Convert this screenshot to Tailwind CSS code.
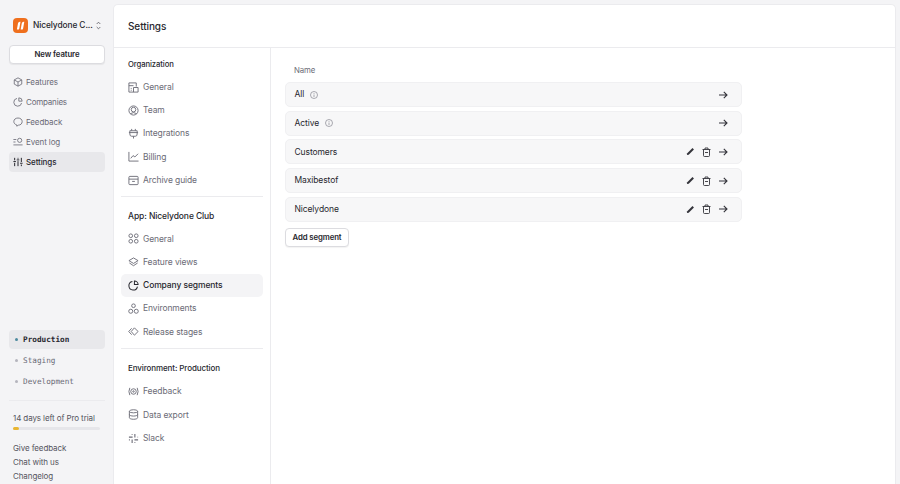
<!DOCTYPE html>
<html lang="en">
<head>
<meta charset="UTF-8">
<title>Settings</title>
<script src="https://cdn.jsdelivr.net/npm/@tailwindcss/browser@4"></script>
</head>
<body class="h-[484px] w-[900px] overflow-hidden bg-[#f4f4f6] font-['Inter',sans-serif] text-[8px] tracking-[-0.1px] text-[#6b6b76]">
<div class="flex h-full">
  <!-- sidebar -->
  <aside class="flex w-[113px] shrink-0 flex-col pl-[9px] pr-[8px]">
    <div class="mt-[17px] flex h-[17px] items-center pl-[4px]">
      <svg class="h-[15px] w-[15px] shrink-0" viewBox="0 0 15 15"><rect width="15" height="15" rx="4" fill="#ef6f1d"/><path d="M3.900 11.600 5 5.300Q5.300 3.800 6.800 3.800H7.500L6.300 10.400Q6.100 11.600 4.900 11.600ZM7.700 11.600 8.800 5.300Q9.100 3.800 10.600 3.800H11.300L10.100 10.400Q9.900 11.600 8.700 11.600Z" fill="#fff"/></svg>
      <span class="ml-[5px] w-[56px] whitespace-nowrap text-[8.400px] font-medium text-[#27272e]">Nicelydone C...</span>
      <svg class="ml-[7px] h-[9px] w-[5px] shrink-0" viewBox="0 0 5 9" fill="none" stroke="#55555e" stroke-width=".8"><path d="M.7 3 2.500 1.200 4.300 3M.7 6 2.500 7.800 4.300 6"/></svg>
    </div>
    <button class="mt-[11px] h-[19px] w-[96px] rounded-[4px] border border-[#dcdce0] bg-white text-[7.800px] font-semibold text-[#27272e] shadow-[0_1px_1px_rgba(0,0,0,.06)]">New feature</button>
    <nav class="mt-[8px] flex flex-col">
      <a class="flex h-[20px] items-center gap-[3px] pl-[4px]">
        <svg class="h-[10px] w-[10px] shrink-0" viewBox="0 0 12 12" fill="none" stroke="#6b6b76" stroke-width="1"><path d="M6 1 10.500 3.500V8.500L6 11 1.500 8.500V3.500ZM1.500 3.500 6 6 10.500 3.500M6 6V11"/></svg>
        <span>Features</span>
      </a>
      <a class="flex h-[20px] items-center gap-[3px] pl-[4px]">
        <svg class="h-[10px] w-[10px] shrink-0" viewBox="0 0 12 12" fill="none" stroke="#6b6b76" stroke-width="1"><path d="M4.800 1.700A4.700 4.700 0 1 0 10.300 7.200M7 1V5H11A4 4 0 0 0 7 1Z"/></svg>
        <span class="tracking-[-0.2px]">Companies</span>
      </a>
      <a class="flex h-[20px] items-center gap-[3px] pl-[4px]">
        <svg class="h-[10px] w-[10px] shrink-0" viewBox="0 0 12 12" fill="none" stroke="#6b6b76" stroke-width="1"><path d="M6 1.200C9 1.200 11 3 11 5.500S9 9.800 6.500 9.800L4.500 11V9.500C2.500 9 1 7.500 1 5.500 1 3 3 1.200 6 1.200Z"/></svg>
        <span>Feedback</span>
      </a>
      <a class="flex h-[20px] items-center gap-[3px] pl-[4px]">
        <svg class="h-[10px] w-[10px] shrink-0" viewBox="0 0 12 12" fill="none" stroke="#6b6b76" stroke-width="1"><path d="M.5 3H4M.5 6H3M.5 9.500H11.500"/><circle cx="8" cy="4" r="2.500"/></svg>
        <span>Event log</span>
      </a>
      <a class="flex h-[20px] items-center gap-[3px] rounded-[4px] bg-[#e8e8eb] pl-[4px] font-medium text-[#27272e]">
        <svg class="h-[10px] w-[10px] shrink-0" viewBox="0 0 12 12" fill="none" stroke="#27272e" stroke-width="1.200"><path d="M2 1V4M2 7V11M6 1V2M6 5V11M10 1V6M10 9V11M.5 5.500H3.500M4.500 3.500H7.500M8.500 7.500H11.500"/></svg>
        <span>Settings</span>
      </a>
    </nav>
    <div class="mt-auto flex flex-col">
      <div class="flex h-[19px] items-center gap-[5px] rounded-[4px] bg-[#e8e8eb] pl-[6px] font-['DejaVu_Sans_Mono',monospace] text-[7.700px] font-bold tracking-normal text-[#27272e]">
        <span class="h-[3px] w-[3px] rounded-full bg-[#4d8a9e]"></span>Production
      </div>
      <div class="mt-[2px] flex h-[19px] items-center gap-[5px] pl-[6px] font-['DejaVu_Sans_Mono',monospace] text-[7.700px] tracking-normal">
        <span class="h-[3px] w-[3px] rounded-full bg-[#b5b5bd]"></span>Staging
      </div>
      <div class="mt-[2px] flex h-[19px] items-center gap-[5px] pl-[6px] font-['DejaVu_Sans_Mono',monospace] text-[7.700px] tracking-normal">
        <span class="h-[3px] w-[3px] rounded-full bg-[#b5b5bd]"></span>Development
      </div>
      <div class="mt-[9px] border-t border-[#ebebee] pl-[4px] pt-[10px]">
        <p class="whitespace-nowrap leading-[14px] text-[#55555e]">14 days left of Pro trial</p>
        <div class="mt-[1.500px] h-[3px] w-[87px] rounded-full bg-[#e6e6ea]">
          <div class="h-[3px] rounded-full bg-[#e9b632]" style="width: 7%"></div>
        </div>
        <div class="mt-[12px] flex flex-col gap-[2px] pb-[2.500px] text-[#55555e]">
          <a class="leading-[12px]">Give feedback</a>
          <a class="leading-[12px]">Chat with us</a>
          <a class="leading-[12px]">Changelog</a>
        </div>
      </div>
    </div>
  </aside>

  <!-- main panel -->
  <main class="mr-[4px] mt-[4px] flex min-w-0 flex-1 flex-col rounded-t-[5px] border border-b-0 border-[#ebebee] bg-white">
    <header class="flex h-[43px] shrink-0 items-center border-b border-[#ebebee] pl-[14px] text-[10px] font-medium text-[#27272e]">Settings</header>
    <div class="flex min-h-0 flex-1 text-[8.500px]">
      <!-- settings nav -->
      <div class="w-[157px] shrink-0 border-r border-[#ebebee] px-[7px]">
        <h3 class="mt-[10.500px] pl-[7px] text-[7.700px] font-medium leading-[12px] text-[#27272e]">Organization</h3>
        <div class="mt-[5px] flex flex-col">
          <a class="flex h-[23.250px] items-center gap-[4px] pl-[7px]"><svg class="h-[11px] w-[11px] shrink-0" viewBox="0 0 12 12" fill="none" stroke="#6b6b76"><path d="M1 11V1H9V5M1 4H6M6 11V6H11V11H1M3 7H4M3 9H4"/></svg>General</a>
          <a class="flex h-[23.250px] items-center gap-[4px] pl-[7px]"><svg class="h-[11px] w-[11px] shrink-0" viewBox="0 0 12 12" fill="none" stroke="#6b6b76"><circle cx="6" cy="6" r="5"/><circle cx="6" cy="5" r="2.500"/><path d="M2.500 9.500Q6 7 9.500 9.500"/></svg>Team</a>
          <a class="flex h-[23.250px] items-center gap-[4px] pl-[7px]"><svg class="h-[11px] w-[11px] shrink-0" viewBox="0 0 12 12" fill="none" stroke="#6b6b76"><path d="M4 1V3M8 1V3M6 9V11.500M2 3H10V6.500Q10 9 8 9H4Q2 9 2 6.500ZM1 5H11"/></svg>Integrations</a>
          <a class="flex h-[23.250px] items-center gap-[4px] pl-[7px]"><svg class="h-[11px] w-[11px] shrink-0" viewBox="0 0 12 12" fill="none" stroke="#6b6b76"><path d="M1 1V11H11.500M3 8 5.500 5 7.500 6.500 11 3"/></svg>Billing</a>
          <a class="flex h-[23.250px] items-center gap-[4px] pl-[7px]"><svg class="h-[11px] w-[11px] shrink-0" viewBox="0 0 12 12" fill="none" stroke="#6b6b76"><rect x="1" y="1.500" width="10" height="9" rx="1"/><path d="M1 4.500H11M4.500 7H7.500"/></svg>Archive guide</a>
        </div>
        <div class="mt-[4.500px] border-t border-[#ebebee]"></div>
        <h3 class="mt-[12.500px] pl-[7px] text-[8.500px] font-medium leading-[12px] text-[#27272e]">App: Nicelydone Club</h3>
        <div class="mt-[5.500px] flex flex-col">
          <a class="flex h-[23.250px] items-center gap-[4px] pl-[7px]"><svg class="h-[11px] w-[11px] shrink-0" viewBox="0 0 12 12" fill="none" stroke="#6b6b76"><circle cx="3" cy="3" r="2"/><circle cx="9" cy="3" r="2"/><circle cx="3" cy="9" r="2"/><circle cx="9" cy="9" r="2"/></svg>General</a>
          <a class="flex h-[23.250px] items-center gap-[4px] pl-[7px]"><svg class="h-[11px] w-[11px] shrink-0" viewBox="0 0 12 12" fill="none" stroke="#6b6b76"><path d="M6 1 11 4 6 7 1 4ZM1.500 6.500 6 9.500 10.500 6.500"/></svg>Feature views</a>
          <a class="flex h-[23.250px] items-center gap-[4px] rounded-[5px] bg-[#f4f4f6] pl-[7px] font-medium text-[#27272e]"><svg class="h-[11px] w-[11px] shrink-0" viewBox="0 0 12 12" fill="none" stroke="#27272e" stroke-width="1.100"><path d="M4.800 1.700A4.700 4.700 0 1 0 10.300 7.200M7 1V5H11A4 4 0 0 0 7 1Z"/></svg>Company segments</a>
          <a class="flex h-[23.250px] items-center gap-[4px] pl-[7px]"><svg class="h-[11px] w-[11px] shrink-0" viewBox="0 0 12 12" fill="none" stroke="#6b6b76"><circle cx="6" cy="3" r="2"/><circle cx="3" cy="9" r="2.200"/><circle cx="9" cy="9" r="2.200"/></svg>Environments</a>
          <a class="flex h-[23.250px] items-center gap-[4px] pl-[7px]"><svg class="h-[11px] w-[11px] shrink-0" viewBox="0 0 12 12" fill="none" stroke="#6b6b76"><path d="M4 2.500 .8 6 4 9.500M7 2 11 6 7 10 3.500 6Z"/></svg>Release stages</a>
        </div>
        <div class="mt-[4.500px] border-t border-[#ebebee]"></div>
        <h3 class="mt-[12.500px] pl-[7px] text-[8px] font-medium leading-[12px] text-[#27272e]">Environment: Production</h3>
        <div class="mt-[6.500px] flex flex-col">
          <a class="flex h-[23.250px] items-center gap-[4px] pl-[7px]"><svg class="h-[11px] w-[11px] shrink-0" viewBox="0 0 12 12" fill="none" stroke="#6b6b76"><circle cx="6" cy="6" r="3"/><circle cx="6" cy="6" r=".8"/><path d="M2 2Q0 6 2 10M10 2Q12 6 10 10"/></svg>Feedback</a>
          <a class="flex h-[23.250px] items-center gap-[4px] pl-[7px]"><svg class="h-[11px] w-[11px] shrink-0" viewBox="0 0 12 12" fill="none" stroke="#6b6b76"><ellipse cx="6" cy="2.500" rx="4.500" ry="1.700"/><path d="M1.500 2.500V9.500C1.500 10.500 3.500 11.200 6 11.200S10.500 10.500 10.500 9.500V2.500M1.500 6C1.500 7 3.500 7.700 6 7.700S10.500 7 10.500 6"/></svg>Data export</a>
          <a class="flex h-[23.250px] items-center gap-[4px] pl-[7px]"><svg class="h-[11px] w-[11px] shrink-0" viewBox="0 0 12 12" fill="none" stroke="#6b6b76" stroke-width="1.200"><path d="M1 4.500H5M4.500 1V2M7.500 1V5M10.500 4.500H11M7 7.500H11M7.500 10V11M4.500 7V11M1 7.500H2"/></svg>Slack</a>
        </div>
      </div>
      <!-- segments -->
      <section class="flex-1 pl-[14px]">
        <div class="w-[457px]">
          <div class="mt-[15.500px] pl-[9px] text-[7.800px] leading-[12px]">Name</div>
          <div class="mt-[6.500px] flex flex-col gap-[3.700px] text-[#27272e]">
            <div class="flex h-[25px] items-center rounded-[5px] border border-[#f0f0f2] bg-[#f7f7f8] pl-[8.500px] pr-[13.500px]">
              <span>All</span>
              <svg class="ml-[6px] h-[8px] w-[8px]" viewBox="0 0 8 8" fill="none" stroke="#85858f" stroke-width=".7"><circle cx="4" cy="4" r="3.500"/><path d="M4 3.500V6M4 2V2.800"/></svg>
              <svg class="ml-auto h-[10px] w-[10px]" viewBox="0 0 10 10" fill="none" stroke="#33333a" stroke-width="1.100"><path d="M1 5H9M5.800 1.800 9 5 5.800 8.200"/></svg>
            </div>
            <div class="flex h-[25px] items-center rounded-[5px] border border-[#f0f0f2] bg-[#f7f7f8] pl-[8.500px] pr-[13.500px]">
              <span>Active</span>
              <svg class="ml-[5.500px] h-[8px] w-[8px]" viewBox="0 0 8 8" fill="none" stroke="#85858f" stroke-width=".7"><circle cx="4" cy="4" r="3.500"/><path d="M4 3.500V6M4 2V2.800"/></svg>
              <svg class="ml-auto h-[10px] w-[10px]" viewBox="0 0 10 10" fill="none" stroke="#33333a" stroke-width="1.100"><path d="M1 5H9M5.800 1.800 9 5 5.800 8.200"/></svg>
            </div>
            <div class="flex h-[25px] items-center rounded-[5px] border border-[#f0f0f2] bg-[#f7f7f8] pl-[8.500px] pr-[13.500px]">
              <span>Customers</span>
              <svg class="ml-auto h-[9px] w-[9px]" viewBox="0 0 10 10" fill="#33333a"><path d="M1 9 1.400 7 7.200 1.200 8.800 2.800 3 8.600Z"/></svg>
              <svg class="ml-[7.500px] h-[10px] w-[9px]" viewBox="0 0 9 10" fill="none" stroke="#33333a" stroke-width=".9"><path d="M.5 2.500H8.500M3 2.500V1H6V2.500M1.500 2.500V8.500Q1.500 9.500 2.500 9.500H6.500Q7.500 9.500 7.500 8.500V2.500M3 5.500H6"/></svg>
              <svg class="ml-[6.500px] h-[10px] w-[10px]" viewBox="0 0 10 10" fill="none" stroke="#33333a" stroke-width="1.100"><path d="M1 5H9M5.800 1.800 9 5 5.800 8.200"/></svg>
            </div>
            <div class="flex h-[25px] items-center rounded-[5px] border border-[#f0f0f2] bg-[#f7f7f8] pl-[8.500px] pr-[13.500px]">
              <span>Maxibestof</span>
              <svg class="ml-auto h-[9px] w-[9px]" viewBox="0 0 10 10" fill="#33333a"><path d="M1 9 1.400 7 7.200 1.200 8.800 2.800 3 8.600Z"/></svg>
              <svg class="ml-[7.500px] h-[10px] w-[9px]" viewBox="0 0 9 10" fill="none" stroke="#33333a" stroke-width=".9"><path d="M.5 2.500H8.500M3 2.500V1H6V2.500M1.500 2.500V8.500Q1.500 9.500 2.500 9.500H6.500Q7.500 9.500 7.500 8.500V2.500M3 5.500H6"/></svg>
              <svg class="ml-[6.500px] h-[10px] w-[10px]" viewBox="0 0 10 10" fill="none" stroke="#33333a" stroke-width="1.100"><path d="M1 5H9M5.800 1.800 9 5 5.800 8.200"/></svg>
            </div>
            <div class="flex h-[25px] items-center rounded-[5px] border border-[#f0f0f2] bg-[#f7f7f8] pl-[8.500px] pr-[13.500px]">
              <span>Nicelydone</span>
              <svg class="ml-auto h-[9px] w-[9px]" viewBox="0 0 10 10" fill="#33333a"><path d="M1 9 1.400 7 7.200 1.200 8.800 2.800 3 8.600Z"/></svg>
              <svg class="ml-[7.500px] h-[10px] w-[9px]" viewBox="0 0 9 10" fill="none" stroke="#33333a" stroke-width=".9"><path d="M.5 2.500H8.500M3 2.500V1H6V2.500M1.500 2.500V8.500Q1.500 9.500 2.500 9.500H6.500Q7.500 9.500 7.500 8.500V2.500M3 5.500H6"/></svg>
              <svg class="ml-[6.500px] h-[10px] w-[10px]" viewBox="0 0 10 10" fill="none" stroke="#33333a" stroke-width="1.100"><path d="M1 5H9M5.800 1.800 9 5 5.800 8.200"/></svg>
            </div>
          </div>
          <button class="mt-[6.500px] h-[19px] w-[64px] rounded-[4px] border border-[#dcdce0] bg-white text-[7.800px] font-semibold text-[#27272e] shadow-[0_1px_1px_rgba(0,0,0,.05)]">Add segment</button>
        </div>
      </section>
    </div>
  </main>
</div>
</body>
</html>
